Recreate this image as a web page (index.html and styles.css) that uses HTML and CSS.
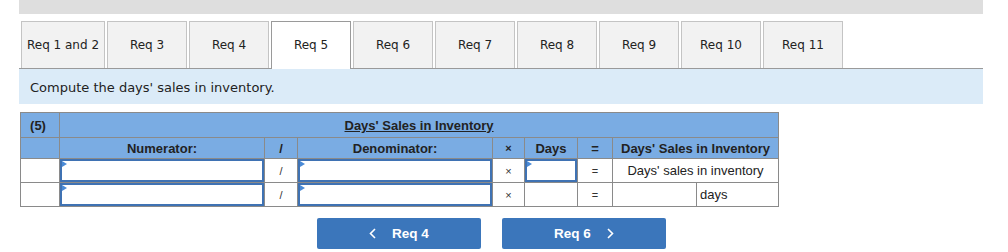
FILE: index.html
```html
<!DOCTYPE html>
<html>
<head>
<meta charset="utf-8">
<link rel="stylesheet" href="styles.css">
</head>
<body>
<div class="page">
  <div class="topbar"></div>
  <div class="tabs">
    <div class="tab tab-wide">Req 1 and 2</div>
    <div class="tab">Req 3</div>
    <div class="tab">Req 4</div>
    <div class="tab active">Req 5</div>
    <div class="tab">Req 6</div>
    <div class="tab">Req 7</div>
    <div class="tab">Req 8</div>
    <div class="tab">Req 9</div>
    <div class="tab">Req 10</div>
    <div class="tab">Req 11</div>
  </div>
  <div class="panel">Compute the days' sales in inventory.</div>

  <table class="grid">
    <colgroup>
      <col class="c-lbl"><col class="c-num"><col class="c-op"><col class="c-den"><col class="c-x"><col class="c-days"><col class="c-eq"><col class="c-r1"><col class="c-r2">
    </colgroup>
    <tr class="h1">
      <th>(5)</th>
      <th colspan="8"><span class="title">Days' Sales in Inventory</span></th>
    </tr>
    <tr class="h2">
      <th></th>
      <th>Numerator:</th>
      <th>/</th>
      <th>Denominator:</th>
      <th class="sym">×</th>
      <th>Days</th>
      <th>=</th>
      <th colspan="2">Days' Sales in Inventory</th>
    </tr>
    <tr class="row">
      <td></td>
      <td class="in"><div class="field"><input type="text"></div></td>
      <td class="op">/</td>
      <td class="in"><div class="field"><input type="text"></div></td>
      <td class="op sym">×</td>
      <td class="in"><div class="field"><input type="text"></div></td>
      <td class="op">=</td>
      <td colspan="2" class="txt">Days' sales in inventory</td>
    </tr>
    <tr class="row">
      <td></td>
      <td class="in"><div class="field"><input type="text"></div></td>
      <td class="op">/</td>
      <td class="in"><div class="field"><input type="text"></div></td>
      <td class="op sym">×</td>
      <td></td>
      <td class="op">=</td>
      <td></td>
      <td class="unit">days</td>
    </tr>
  </table>

  <div class="nav">
    <button class="btn"><svg width="7" height="11" viewBox="0 0 7 11"><path d="M6 1 L1.5 5.5 L6 10" fill="none" stroke="#fff" stroke-width="1.6"/></svg><span>Req 4</span></button>
    <button class="btn"><span>Req 6</span><svg width="7" height="11" viewBox="0 0 7 11"><path d="M1 1 L5.5 5.5 L1 10" fill="none" stroke="#fff" stroke-width="1.6"/></svg></button>
  </div>
</div>
</body>
</html>
```
FILE: styles.css
```css
html, body {
  margin: 0;
  padding: 0;
  background: #fff;
}
.page {
  padding-left: 19px;
  width: 964px;
}
.topbar {
  height: 14px;
  background: #dedede;
}
.tabs {
  display: flex;
  gap: 2px;
  margin-top: 7px;
  padding-left: 2px;
  height: 47px;
}
.tab {
  box-sizing: border-box;
  width: 80px;
  height: 47px;
  border: 1px solid #c4c4c4;
  border-bottom: none;
  background: #f2f2f2;
  font-family: "DejaVu Sans", Verdana, sans-serif;
  font-size: 12px;
  color: #222;
  display: flex;
  align-items: center;
  justify-content: center;
}
.tab-wide {
  width: 84px;
}
.tab.active {
  background: #fff;
  border-color: #9a9a9a;
  height: 48px;
  padding-bottom: 1px;
  position: relative;
  z-index: 1;
}
.panel {
  box-sizing: border-box;
  height: 36px;
  border-top: 1px solid #9a9a9a;
  background: #dbebf8;
  font-family: "DejaVu Sans", Verdana, sans-serif;
  font-size: 13px;
  color: #222;
  padding: 11px 0 0 11px;
}
.grid {
  margin: 8px 0 0 1px;
  border-collapse: collapse;
  table-layout: fixed;
  width: 759px;
  font-family: "Liberation Sans", Arial, sans-serif;
  font-size: 13px;
  color: #222;
}
.c-lbl { width: 39px; }
.c-num { width: 205px; }
.c-op { width: 33px; }
.c-den { width: 195px; }
.c-x { width: 32px; }
.c-days { width: 53px; }
.c-eq { width: 35px; }
.c-r1 { width: 84px; }
.c-r2 { width: 82px; }
.grid th, .grid td {
  border: 1px solid #8a8a8a;
  padding: 0;
  text-align: center;
}
.grid th {
  background: #7aace3;
  font-weight: bold;
  color: #222;
}
.h1 { height: 25px; }
.h1 th { vertical-align: middle; padding-top: 1px; }
.h1 th:first-child { padding-right: 4px; }
.h2 { height: 21px; }
.title {
  text-decoration: underline;
}
.row { height: 24px; }
.grid td.op {
  font-size: 11px;
  color: #333;
}
.sym { font-size: 11px; }
.grid td.txt {
  font-size: 13px;
  color: #222;
}
.grid td.unit {
  text-align: left;
  padding-left: 3px;
  color: #222;
}
.field {
  position: relative;
  height: 23px;
}
.field::before {
  content: "";
  position: absolute;
  left: 2px;
  top: 2px;
  width: 0;
  height: 0;
  border-top: 3px solid transparent;
  border-bottom: 3px solid transparent;
  border-left: 5px solid #4a8ad6;
}
.field input {
  display: block;
  box-sizing: border-box;
  width: 100%;
  height: 23px;
  margin: 0;
  border: 2px solid #3f72b3;
  background: #fff;
  padding: 0;
  outline: none;
}
.nav {
  display: flex;
  gap: 21px;
  margin-top: 11px;
  padding-left: 298px;
}
.btn {
  box-sizing: border-box;
  width: 164px;
  height: 31px;
  border: none;
  border-radius: 2px;
  background: #3b76bb;
  color: #fff;
  font-family: "Liberation Sans", Arial, sans-serif;
  font-weight: bold;
  font-size: 13.5px;
  display: flex;
  align-items: center;
  justify-content: center;
  gap: 16px;
  padding: 0;
}
```
